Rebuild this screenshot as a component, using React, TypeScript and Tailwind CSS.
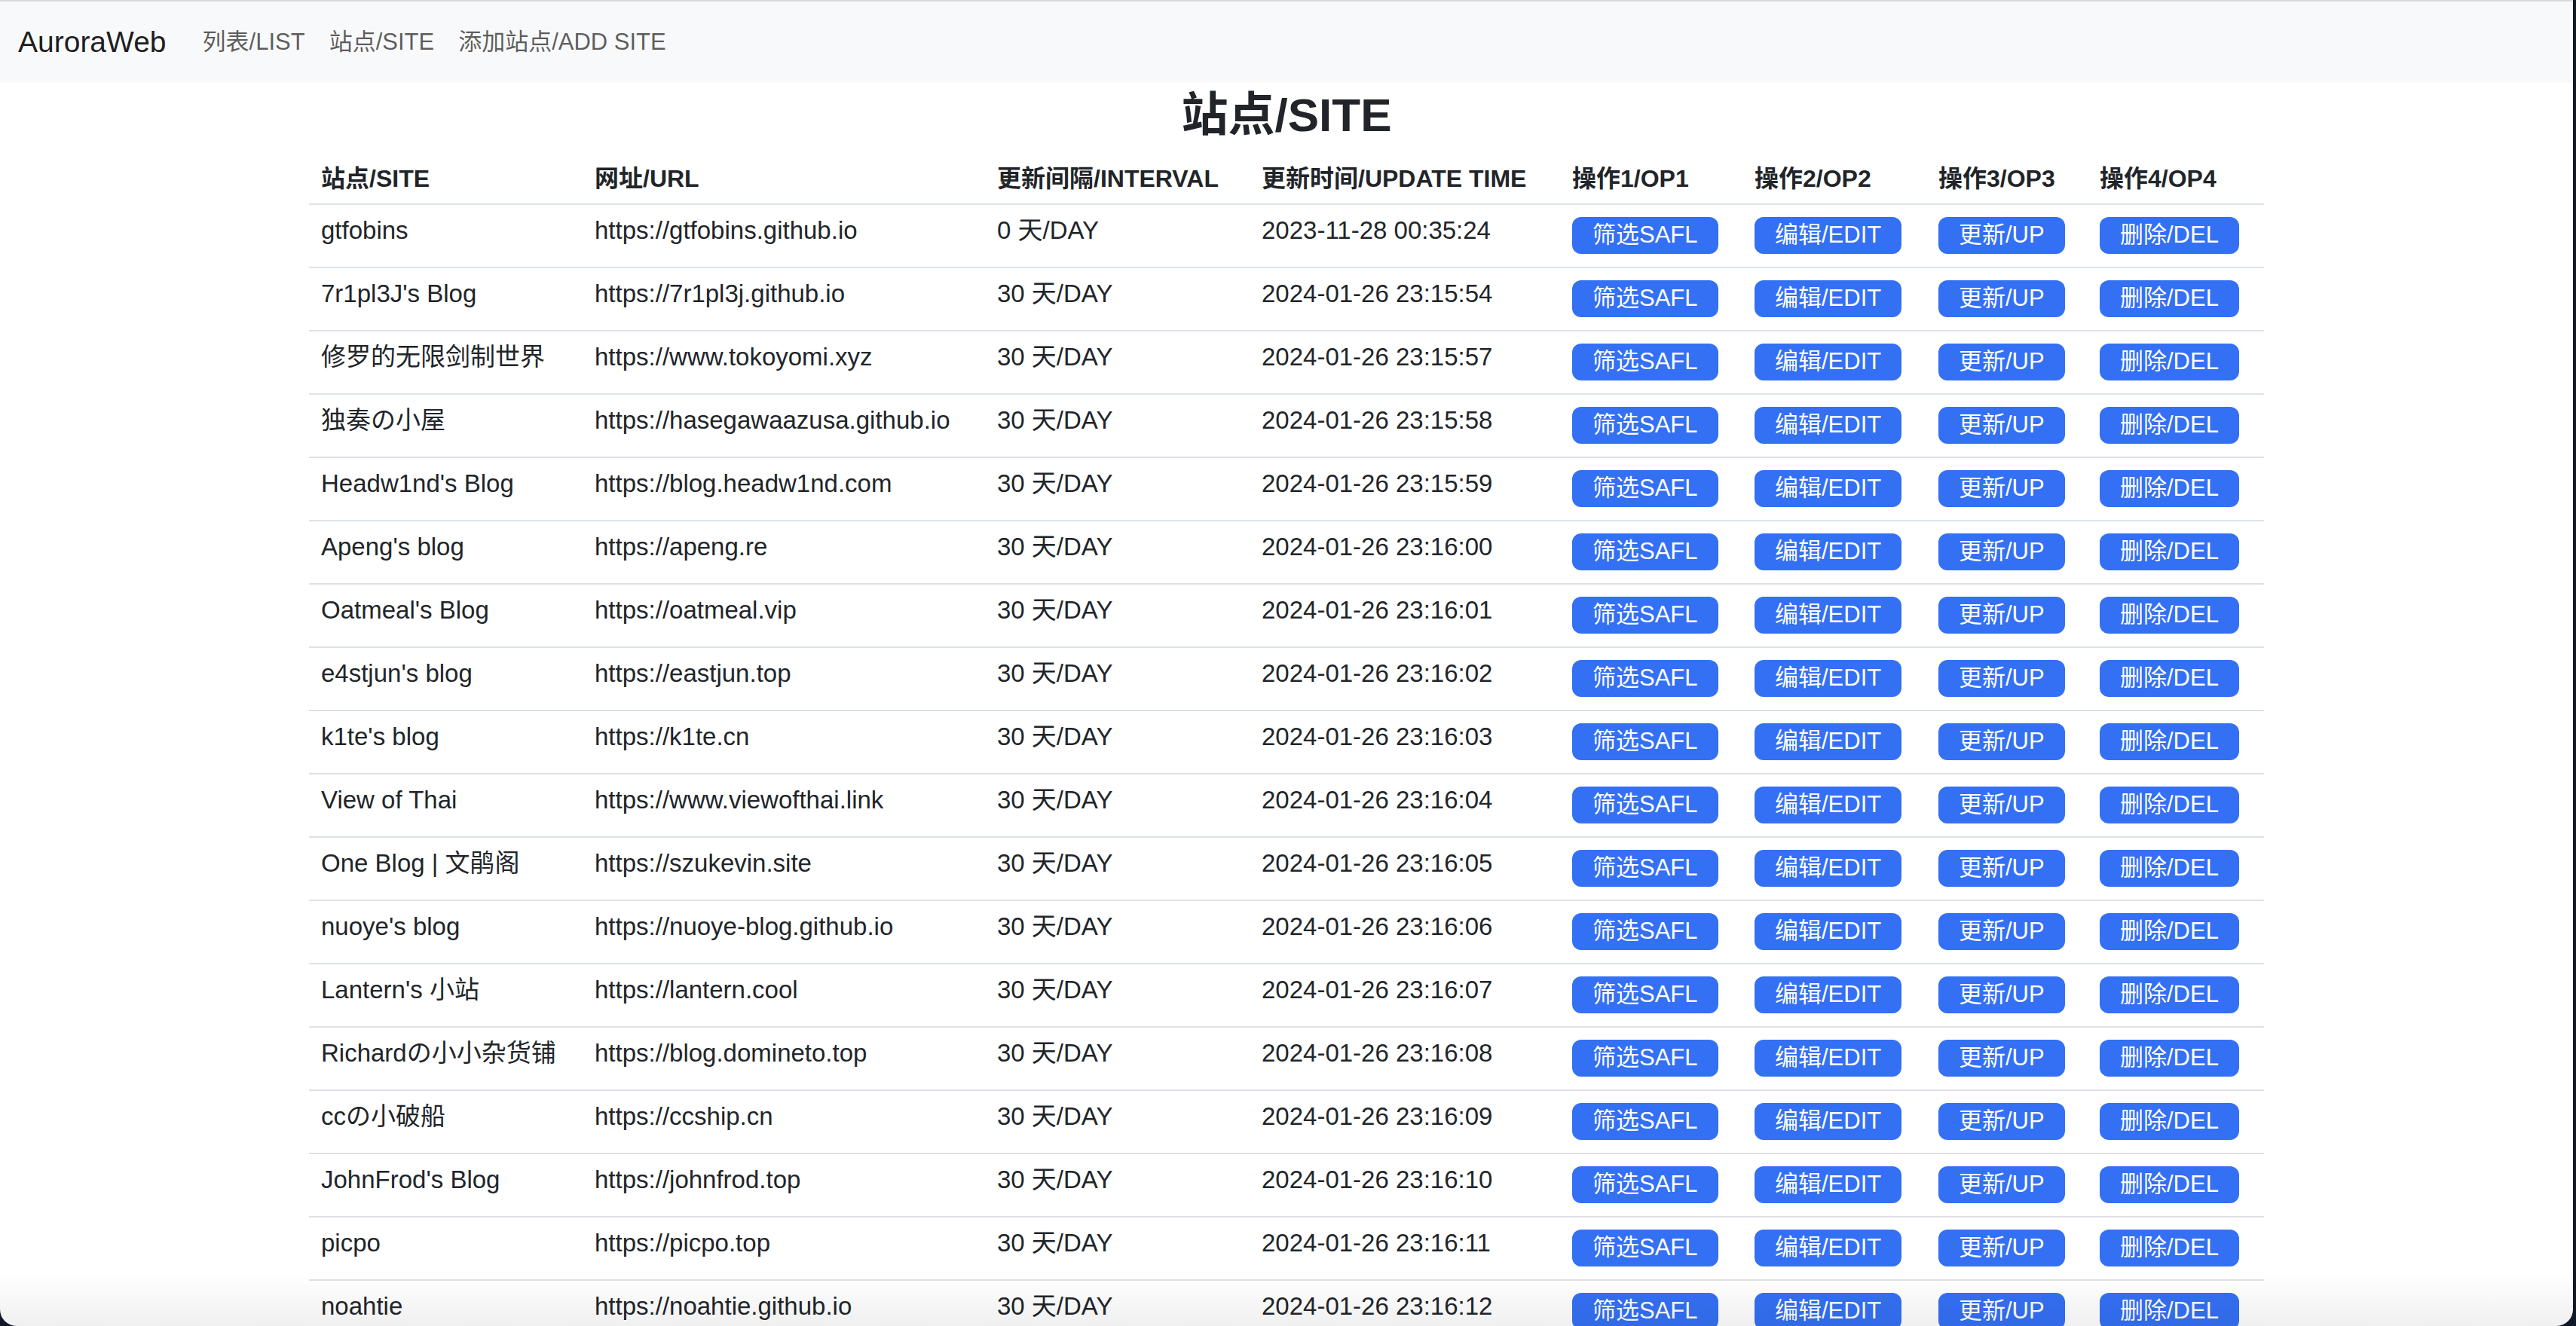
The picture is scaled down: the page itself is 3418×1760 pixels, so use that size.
const sites = [
  { name: "gtfobins", url: "https://gtfobins.github.io", interval: "0 天/DAY", time: "2023-11-28 00:35:24" },
  { name: "7r1pl3J's Blog", url: "https://7r1pl3j.github.io", interval: "30 天/DAY", time: "2024-01-26 23:15:54" },
  { name: "修罗的无限剑制世界", url: "https://www.tokoyomi.xyz", interval: "30 天/DAY", time: "2024-01-26 23:15:57" },
  { name: "独奏の小屋", url: "https://hasegawaazusa.github.io", interval: "30 天/DAY", time: "2024-01-26 23:15:58" },
  { name: "Headw1nd's Blog", url: "https://blog.headw1nd.com", interval: "30 天/DAY", time: "2024-01-26 23:15:59" },
  { name: "Apeng's blog", url: "https://apeng.re", interval: "30 天/DAY", time: "2024-01-26 23:16:00" },
  { name: "Oatmeal's Blog", url: "https://oatmeal.vip", interval: "30 天/DAY", time: "2024-01-26 23:16:01" },
  { name: "e4stjun's blog", url: "https://eastjun.top", interval: "30 天/DAY", time: "2024-01-26 23:16:02" },
  { name: "k1te's blog", url: "https://k1te.cn", interval: "30 天/DAY", time: "2024-01-26 23:16:03" },
  { name: "View of Thai", url: "https://www.viewofthai.link", interval: "30 天/DAY", time: "2024-01-26 23:16:04" },
  { name: "One Blog | 文鹃阁", url: "https://szukevin.site", interval: "30 天/DAY", time: "2024-01-26 23:16:05" },
  { name: "nuoye's blog", url: "https://nuoye-blog.github.io", interval: "30 天/DAY", time: "2024-01-26 23:16:06" },
  { name: "Lantern's 小站", url: "https://lantern.cool", interval: "30 天/DAY", time: "2024-01-26 23:16:07" },
  { name: "Richardの小小杂货铺", url: "https://blog.domineto.top", interval: "30 天/DAY", time: "2024-01-26 23:16:08" },
  { name: "ccの小破船", url: "https://ccship.cn", interval: "30 天/DAY", time: "2024-01-26 23:16:09" },
  { name: "JohnFrod's Blog", url: "https://johnfrod.top", interval: "30 天/DAY", time: "2024-01-26 23:16:10" },
  { name: "picpo", url: "https://picpo.top", interval: "30 天/DAY", time: "2024-01-26 23:16:11" },
  { name: "noahtie", url: "https://noahtie.github.io", interval: "30 天/DAY", time: "2024-01-26 23:16:12" },
];

const headers = [
  "站点/SITE",
  "网址/URL",
  "更新间隔/INTERVAL",
  "更新时间/UPDATE TIME",
  "操作1/OP1",
  "操作2/OP2",
  "操作3/OP3",
  "操作4/OP4",
];

const actions = ["筛选SAFL", "编辑/EDIT", "更新/UP", "删除/DEL"];

const cols = "grid grid-cols-[363px_534px_351px_412px_242px_244px_214px_234px]";

export default function App() {
  return (
    <div
      className="flex h-[1760px] w-[3418px] overflow-hidden bg-[#111827]"
      style={{ fontFamily: '"Liberation Sans", "Noto Sans CJK SC", sans-serif' }}
    >
      <div className="relative flex w-[3414px] flex-col overflow-hidden rounded-b-[22px] bg-white text-[#212529]">
        {/* Navbar */}
        <nav className="flex h-[110px] shrink-0 items-center border-t-2 border-[#d9dadc] bg-[#f8f9fa] px-6">
          <span className="mr-8 text-[39px] text-black/90">AuroraWeb</span>
          <a className="px-4 text-[31px] text-black/65">列表/LIST</a>
          <a className="px-4 text-[31px] text-black/65">站点/SITE</a>
          <a className="px-4 text-[31px] text-black/65">添加站点/ADD SITE</a>
        </nav>

        {/* Title */}
        <div className="flex h-[85px] shrink-0 items-center justify-center">
          <h2 className="text-[62px] font-semibold leading-none">站点/SITE</h2>
        </div>

        {/* Table */}
        <div className="mx-auto w-[2594px] shrink-0">
          <div className={`${cols} h-[77px] border-b-2 border-[#dee2e6]`}>
            {headers.map((h) => (
              <div key={h} className="whitespace-nowrap pl-4 pt-[18px] text-[32px] font-bold leading-[48px]">
                {h}
              </div>
            ))}
          </div>

          {sites.map((s) => (
            <div key={s.time} className={`${cols} h-[84px] border-b-2 border-[#dee2e6]`}>
              <div className="whitespace-nowrap pl-4 pt-[10px] text-[33px] leading-[48px]">{s.name}</div>
              <div className="whitespace-nowrap pl-4 pt-[10px] text-[33px] leading-[48px]">{s.url}</div>
              <div className="whitespace-nowrap pl-4 pt-[10px] text-[33px] leading-[48px]">{s.interval}</div>
              <div className="whitespace-nowrap pl-4 pt-[10px] text-[33px] leading-[48px]">{s.time}</div>
              {actions.map((a) => (
                <div key={a} className="pl-4 pt-[16px]">
                  <button className="flex h-[49px] items-center rounded-[12px] bg-[#3470f4] px-[27px] text-[31px] whitespace-nowrap text-white">
                    {a}
                  </button>
                </div>
              ))}
            </div>
          ))}
        </div>

        {/* soft shadow at bottom edge */}
        <div className="pointer-events-none absolute inset-x-0 bottom-0 h-[70px] bg-gradient-to-b from-transparent to-black/[0.06]" />
      </div>
      <div className="w-[4px] shrink-0" />
    </div>
  );
}
